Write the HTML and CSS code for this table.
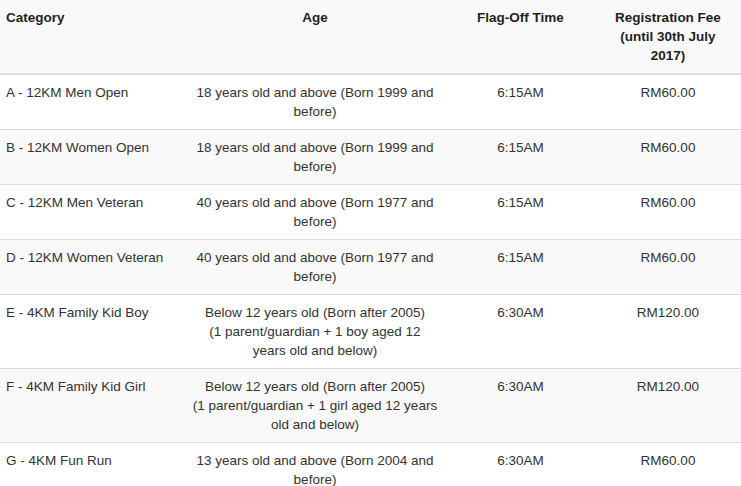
FILE: index.html
```html
<!DOCTYPE html>
<html>
<head>
<meta charset="utf-8">
<link rel="stylesheet" href="styles.css">
</head>
<body>
<table class="fees">
  <colgroup>
    <col class="c-cat">
    <col class="c-age">
    <col class="c-time">
    <col class="c-fee">
  </colgroup>
  <thead>
    <tr class="row-alt">
      <th class="cell-left">Category</th>
      <th>Age</th>
      <th>Flag-Off Time</th>
      <th>Registration Fee (until 30th July 2017)</th>
    </tr>
  </thead>
  <tbody>
    <tr>
      <td class="cell-left">A - 12KM Men Open</td>
      <td>18 years old and above (Born 1999 and before)</td>
      <td>6:15AM</td>
      <td>RM60.00</td>
    </tr>
    <tr class="row-alt">
      <td class="cell-left">B - 12KM Women Open</td>
      <td>18 years old and above (Born 1999 and before)</td>
      <td>6:15AM</td>
      <td>RM60.00</td>
    </tr>
    <tr>
      <td class="cell-left">C - 12KM Men Veteran</td>
      <td>40 years old and above (Born 1977 and before)</td>
      <td>6:15AM</td>
      <td>RM60.00</td>
    </tr>
    <tr class="row-alt">
      <td class="cell-left">D - 12KM Women Veteran</td>
      <td>40 years old and above (Born 1977 and before)</td>
      <td>6:15AM</td>
      <td>RM60.00</td>
    </tr>
    <tr>
      <td class="cell-left">E - 4KM Family Kid Boy</td>
      <td>Below 12 years old (Born after 2005)<br>(1 parent/guardian + 1 boy aged 12 years old and below)</td>
      <td>6:30AM</td>
      <td>RM120.00</td>
    </tr>
    <tr class="row-alt">
      <td class="cell-left">F - 4KM Family Kid Girl</td>
      <td>Below 12 years old (Born after 2005)<br>(1 parent/guardian + 1 girl aged 12 years old and below)</td>
      <td>6:30AM</td>
      <td>RM120.00</td>
    </tr>
    <tr>
      <td class="cell-left">G - 4KM Fun Run</td>
      <td>13 years old and above (Born 2004 and before)</td>
      <td>6:30AM</td>
      <td>RM60.00</td>
    </tr>
  </tbody>
</table>
</body>
</html>
```

FILE: styles.css
```css
html, body {
  margin: 0;
  padding: 0;
  background: #ffffff;
  overflow: hidden;
}

.fees {
  width: 741px;
  table-layout: fixed;
  border-collapse: collapse;
  border-spacing: 0;
  font-family: "Liberation Sans", Arial, sans-serif;
  font-size: 13.5px;
  line-height: 19px;
  color: #333333;
}

.c-cat { width: 184px; }
.c-age { width: 262px; }
.c-time { width: 149px; }
.c-fee { width: 146px; }

.fees th,
.fees td {
  padding: 8px;
  text-align: center;
  vertical-align: top;
}

.fees th {
  font-weight: bold;
  color: #1f1f1f;
  border-bottom: 2px solid #dddddd;
}

.fees td {
  border-top: 1px solid #dddddd;
}

.fees .cell-left {
  text-align: left;
  padding-left: 6px;
}

.row-alt {
  background: #f9f9f9;
}
```
